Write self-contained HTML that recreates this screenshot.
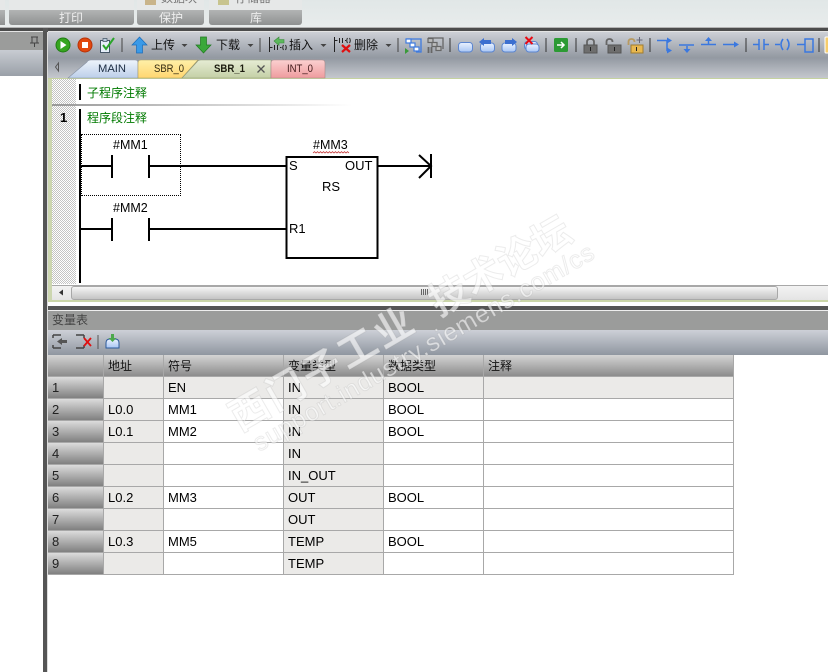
<!DOCTYPE html>
<html lang="zh"><head><meta charset="utf-8"><title>变量表</title>
<style>
html,body{margin:0;padding:0;background:#fff}
#p{position:relative;width:828px;height:672px;overflow:hidden;background:#fff;font:13px/16px "Liberation Sans","Noto Sans CJK SC",sans-serif;color:#000}
#p div{position:absolute}
.t{white-space:nowrap}
.g{color:#007a00;font-size:12px}
.tb{color:#111;font-size:12px;top:37px}
.cell{box-sizing:border-box;height:22px;border-right:1px solid #a8a8a8;border-bottom:1px solid #a8a8a8;padding:3px 0 0 4px;white-space:nowrap;line-height:16px}
.h{background:linear-gradient(#d4d4d4,#8c8c8c);font-size:12px;color:#111}
.n{background:linear-gradient(#dcdcdc,#808080);color:#222}
.x{background:#ebeae8}
.w{background:#fff}
</style></head><body><div id="p">
<!-- top ribbon -->
<div style="left:0;top:0;width:828px;height:27px;background:linear-gradient(#e1e7e7,#e8ecec)"></div>
<div style="left:0;top:0;width:5px;height:25px;background:linear-gradient(#e6e8e8 10px,#b2b4b4 10px,#8f9191)"></div>
<div style="left:9px;top:0;width:125px;height:25px;background:linear-gradient(#e6e8e8 10px,#b2b4b4 10px,#8f9191);border-radius:0 0 3px 3px"></div>
<div style="left:137px;top:0;width:67px;height:25px;background:linear-gradient(#e6e8e8 10px,#b2b4b4 10px,#8f9191);border-radius:0 0 3px 3px"></div>
<div style="left:209px;top:0;width:93px;height:25px;background:linear-gradient(#e6e8e8 10px,#b2b4b4 10px,#8f9191);border-radius:0 0 3px 3px"></div>
<div class="t" style="left:59px;top:10px;font-size:12px;color:#eee">打印</div>
<div class="t" style="left:159px;top:10px;font-size:12px;color:#eee">保护</div>
<div class="t" style="left:250px;top:10px;font-size:12px;color:#eee">库</div>
<div class="t" style="left:161px;top:-10px;font-size:12px;color:#777">数据块</div>
<div class="t" style="left:235px;top:-10px;font-size:12px;color:#777">存储器</div>
<div style="left:145px;top:0;width:11px;height:5px;background:#c9b48a"></div>
<div style="left:218px;top:0;width:11px;height:5px;background:#c8c48e"></div>
<div style="left:0;top:27px;width:828px;height:1px;background:#b4b4b4"></div>
<div style="left:0;top:28px;width:828px;height:3px;background:#4c4c4c"></div>
<div style="left:0;top:31px;width:828px;height:1px;background:#e4e4e4"></div>
<!-- left panel -->
<div style="left:0;top:32px;width:43px;height:18px;background:#9b9c9b"></div>
<div style="left:0;top:50px;width:43px;height:26px;background:linear-gradient(#c8ccd2,#9aa0a8)"></div>
<div style="left:43px;top:28px;width:5px;height:644px;background:#555"></div>
<div style="left:47px;top:32px;width:1px;height:640px;background:#dcdcdc"></div>
<!-- toolbar -->
<div style="left:48px;top:32px;width:780px;height:46px;background:linear-gradient(#cdd0d6,#9399a2 56%,#c5c8ce)"></div>
<div style="left:48px;top:78px;width:780px;height:1px;background:#c5d2a0"></div>
<div class="t tb" style="left:151px">上传</div>
<div class="t tb" style="left:216px">下载</div>
<div class="t tb" style="left:289px">插入</div>
<div class="t tb" style="left:354px">删除</div>
<!-- editor -->
<div style="left:48px;top:79px;width:4px;height:223px;background:#ccd6b0"></div>
<div style="left:79px;top:84px;width:2px;height:16px;background:#000"></div>
<div style="left:79px;top:109px;width:2px;height:174px;background:#000"></div>
<div class="t g" style="left:87px;top:85px">子程序注释</div>
<div class="t g" style="left:87px;top:110px">程序段注释</div>
<div style="left:81px;top:134px;width:98px;height:60px;border:1px dotted #000"></div>
<div class="t" style="left:113px;top:137px;font-size:12.5px">#MM1</div>
<div class="t" style="left:113px;top:200px;font-size:12.5px">#MM2</div>
<div class="t" style="left:313px;top:137px;font-size:12.5px">#MM3</div>
<div class="t" style="left:289px;top:158px;font-size:13px">S</div>
<div class="t" style="left:345px;top:158px;font-size:13px">OUT</div>
<div class="t" style="left:322px;top:179px;font-size:13px">RS</div>
<div class="t" style="left:289px;top:221px;font-size:13px">R1</div>
<!-- scrollbar -->
<div style="left:52px;top:285px;width:776px;height:15px;background:linear-gradient(#f3f3f3,#e4e4e4);border-top:1px solid #a8a8a8;box-sizing:border-box"></div>
<div style="left:71px;top:286px;width:707px;height:14px;box-sizing:border-box;background:linear-gradient(#f6f6f6,#dcdcdc 50%,#c4c4c4);border:1px solid #a8a8a8;border-radius:3px"></div>
<div style="left:48px;top:300px;width:780px;height:2px;background:#cbd6a8"></div>
<div style="left:48px;top:302px;width:780px;height:4px;background:#fff"></div>
<div style="left:48px;top:306px;width:780px;height:4px;background:#555"></div>
<div style="left:48px;top:310px;width:780px;height:1px;background:#eee"></div>
<!-- var table -->
<div style="left:48px;top:311px;width:780px;height:19px;background:#9b9c9b"></div>
<div class="t" style="left:52px;top:312px;font-size:12px;color:#444">变量表</div>
<div style="left:48px;top:330px;width:780px;height:25px;background:linear-gradient(#cdd0d7,#8f96a0)"></div>
<div class="cell h" style="left:48px;top:355px;width:56px"></div>
<div class="cell h" style="left:104px;top:355px;width:60px">地址</div>
<div class="cell h" style="left:164px;top:355px;width:120px">符号</div>
<div class="cell h" style="left:284px;top:355px;width:100px">变量类型</div>
<div class="cell h" style="left:384px;top:355px;width:100px">数据类型</div>
<div class="cell h" style="left:484px;top:355px;width:250px">注释</div>

<div class="cell n" style="left:48px;top:377px;width:56px">1</div><div class="cell x" style="left:104px;top:377px;width:60px"></div><div class="cell x" style="left:164px;top:377px;width:120px">EN</div><div class="cell x" style="left:284px;top:377px;width:100px">IN</div><div class="cell x" style="left:384px;top:377px;width:100px">BOOL</div><div class="cell x" style="left:484px;top:377px;width:250px"></div>
<div class="cell n" style="left:48px;top:399px;width:56px">2</div><div class="cell x" style="left:104px;top:399px;width:60px">L0.0</div><div class="cell w" style="left:164px;top:399px;width:120px">MM1</div><div class="cell x" style="left:284px;top:399px;width:100px">IN</div><div class="cell w" style="left:384px;top:399px;width:100px">BOOL</div><div class="cell w" style="left:484px;top:399px;width:250px"></div>
<div class="cell n" style="left:48px;top:421px;width:56px">3</div><div class="cell x" style="left:104px;top:421px;width:60px">L0.1</div><div class="cell w" style="left:164px;top:421px;width:120px">MM2</div><div class="cell x" style="left:284px;top:421px;width:100px">IN</div><div class="cell w" style="left:384px;top:421px;width:100px">BOOL</div><div class="cell w" style="left:484px;top:421px;width:250px"></div>
<div class="cell n" style="left:48px;top:443px;width:56px">4</div><div class="cell x" style="left:104px;top:443px;width:60px"></div><div class="cell w" style="left:164px;top:443px;width:120px"></div><div class="cell x" style="left:284px;top:443px;width:100px">IN</div><div class="cell w" style="left:384px;top:443px;width:100px"></div><div class="cell w" style="left:484px;top:443px;width:250px"></div>
<div class="cell n" style="left:48px;top:465px;width:56px">5</div><div class="cell x" style="left:104px;top:465px;width:60px"></div><div class="cell w" style="left:164px;top:465px;width:120px"></div><div class="cell x" style="left:284px;top:465px;width:100px">IN_OUT</div><div class="cell w" style="left:384px;top:465px;width:100px"></div><div class="cell w" style="left:484px;top:465px;width:250px"></div>
<div class="cell n" style="left:48px;top:487px;width:56px">6</div><div class="cell x" style="left:104px;top:487px;width:60px">L0.2</div><div class="cell w" style="left:164px;top:487px;width:120px">MM3</div><div class="cell x" style="left:284px;top:487px;width:100px">OUT</div><div class="cell w" style="left:384px;top:487px;width:100px">BOOL</div><div class="cell w" style="left:484px;top:487px;width:250px"></div>
<div class="cell n" style="left:48px;top:509px;width:56px">7</div><div class="cell x" style="left:104px;top:509px;width:60px"></div><div class="cell w" style="left:164px;top:509px;width:120px"></div><div class="cell x" style="left:284px;top:509px;width:100px">OUT</div><div class="cell w" style="left:384px;top:509px;width:100px"></div><div class="cell w" style="left:484px;top:509px;width:250px"></div>
<div class="cell n" style="left:48px;top:531px;width:56px">8</div><div class="cell x" style="left:104px;top:531px;width:60px">L0.3</div><div class="cell w" style="left:164px;top:531px;width:120px">MM5</div><div class="cell x" style="left:284px;top:531px;width:100px">TEMP</div><div class="cell w" style="left:384px;top:531px;width:100px">BOOL</div><div class="cell w" style="left:484px;top:531px;width:250px"></div>
<div class="cell n" style="left:48px;top:553px;width:56px">9</div><div class="cell x" style="left:104px;top:553px;width:60px"></div><div class="cell w" style="left:164px;top:553px;width:120px"></div><div class="cell x" style="left:284px;top:553px;width:100px">TEMP</div><div class="cell w" style="left:384px;top:553px;width:100px"></div><div class="cell w" style="left:484px;top:553px;width:250px"></div>

<!-- graphics -->
<svg width="828" height="672" viewBox="0 0 828 672" style="position:absolute;left:0;top:0">
<defs>
<linearGradient id="tm" x1="0" y1="0" x2="0" y2="1"><stop offset="0" stop-color="#eef4fc"/><stop offset="1" stop-color="#bccfea"/></linearGradient>
<linearGradient id="ty" x1="0" y1="0" x2="0" y2="1"><stop offset="0" stop-color="#fff0a8"/><stop offset="1" stop-color="#ffd670"/></linearGradient>
<linearGradient id="tg" x1="0" y1="0" x2="0" y2="1"><stop offset="0" stop-color="#e6ecd4"/><stop offset="1" stop-color="#c4d0a6"/></linearGradient>
<linearGradient id="tp" x1="0" y1="0" x2="0" y2="1"><stop offset="0" stop-color="#fbd0d0"/><stop offset="1" stop-color="#ef9c9e"/></linearGradient>
<linearGradient id="bl" x1="0" y1="0" x2="0" y2="1"><stop offset="0" stop-color="#eaf2ff"/><stop offset="1" stop-color="#a9c6f4"/></linearGradient>
<linearGradient id="fade" x1="0" y1="0" x2="1" y2="0"><stop offset="0" stop-color="#999"/><stop offset="1" stop-color="#fff"/></linearGradient>
<pattern id="chk" x="0" y="0" width="2" height="2" patternUnits="userSpaceOnUse"><rect width="2" height="2" fill="#fff"/><rect width="1" height="1" fill="#c4c4c4"/><rect x="1" y="1" width="1" height="1" fill="#c4c4c4"/></pattern>
</defs>
<rect x="52" y="79" width="24" height="205" fill="url(#chk)" shape-rendering="crispEdges"/>
<rect x="52" y="104" width="300" height="2" fill="url(#fade)"/>
<text x="60" y="122" font-family="Liberation Sans,sans-serif" font-size="13" font-weight="bold">1</text>
<!-- pin -->
<path d="M31 37h7M32 37v6h5v-6M30 43h9M34.500 43v4" fill="none" stroke="#444" stroke-width="1"/>
<!-- tabs -->
<path d="M58.500 63v8l-3-4z" fill="none" stroke="#555"/>
<path d="M68 78 L87 62 Q88 60 91 60 H135 Q138 60 138 63 V78Z" fill="url(#tm)" stroke="#8a94a6" stroke-width=".6"/>
<path d="M138 78 V63 Q138 60 141 60 H198 L182 78Z" fill="url(#ty)" stroke="#a89a66" stroke-width=".6"/>
<path d="M182 78 L197 62 Q198 60 201 60 H271 V78Z" fill="url(#tg)" stroke="#8f9a78" stroke-width=".6"/>
<path d="M271 78 V63 Q271 60 274 60 H322 Q325 60 325 63 V78Z" fill="url(#tp)" stroke="#a88" stroke-width=".6"/>
<g font-family="Liberation Sans,sans-serif" font-size="11" fill="#1a2a40">
<text x="98" y="72" textLength="28" lengthAdjust="spacingAndGlyphs">MAIN</text><text x="154" y="72" fill="#332a10" textLength="30" lengthAdjust="spacingAndGlyphs">SBR_0</text>
<text x="214" y="72" font-weight="bold" fill="#1c1c10" textLength="31" lengthAdjust="spacingAndGlyphs">SBR_1</text><text x="287" y="72" fill="#401a1a" textLength="26" lengthAdjust="spacingAndGlyphs">INT_0</text></g>
<path d="M257.500 65.500l7 7M264.500 65.500l-7 7" stroke="#555" stroke-width="1.300"/>
<!-- play stop check -->
<circle cx="63" cy="45" r="7" fill="#36a51f" stroke="#1f7d12"/><path d="M60.500 41v8l6-4z" fill="#fff"/>
<circle cx="85" cy="45" r="7" fill="#e2480e" stroke="#b83208"/><rect x="82" y="42" width="6" height="6" fill="#fff"/>
<path d="M100.500 40.500h6l3 0v12h-9z" fill="#e6eefa" stroke="#456"/><path d="M103 38.500h4v3h-4z" fill="#bcd" stroke="#456" stroke-width=".7"/><path d="M103 45l3 4 8-11" fill="none" stroke="#2aa52a" stroke-width="2"/>
<path d="M122 38v14" stroke="#444"/>
<!-- up / down -->
<path d="M139.500 37l7.500 8h-4.500v8h-6v-8h-4.500z" fill="#3a9ae8" stroke="#1c6cb8" stroke-width=".7"/>
<path d="M181.500 44h6l-3 3z" fill="#444"/>
<path d="M203.500 53l7.500-8h-4.500v-8h-6v8h-4.500z" fill="#3aa83a" stroke="#1f7a1f" stroke-width=".7"/>
<path d="M247.500 44h6l-3 3z" fill="#444"/>
<path d="M260 38v14" stroke="#444"/>
<!-- insert -->
<path d="M269.500 37v15M269.500 47.500h3M274.500 45v5M277.500 45v5M280 47.500h1.500M283.500 45q-1.500 2.500 0 5M285.500 45q1.500 2.500 0 5" fill="none" stroke="#222" stroke-width="1"/>
<path d="M274 41l5-4v2.500h5v3.500h-5v2.500z" fill="#5cb85c" stroke="#3a8a3a" stroke-width=".6"/>
<path d="M320.500 44h6l-3 3z" fill="#444"/>
<!-- delete -->
<path d="M334.500 37v15M334.500 40.500h3M339.500 38v5M342.500 38v5M345 40.500h1M347.500 38q-1.500 2.500 0 5M349.500 38q1.500 2.500 0 5" fill="none" stroke="#222" stroke-width="1"/>
<path d="M342 45l8 7M350 45l-8 7" stroke="#e01010" stroke-width="2.200"/>
<path d="M385.500 44h6l-3 3z" fill="#444"/>
<path d="M398 38v14" stroke="#444"/>
<!-- network -->
<path d="M406 39h15v13h-5" fill="none" stroke="#3d7ae0" stroke-width="1.300"/><g fill="#fff" stroke="#3d7ae0" stroke-width="1.200"><rect x="406" y="39" width="5" height="4"/><rect x="410" y="43" width="5" height="4"/><rect x="414" y="47" width="5" height="4"/></g><path d="M405 48v6l4-3z" fill="#3a9a3a"/>
<path d="M428 38h15v11" fill="none" stroke="#666" stroke-width="1.300"/><g fill="#bbb" stroke="#666" stroke-width="1.200"><rect x="428" y="38.500" width="5" height="4"/><rect x="432" y="42.500" width="5" height="4"/><rect x="436" y="46.500" width="5" height="4"/></g><path d="M428.500 47v6M431.500 47v6" stroke="#666" stroke-width="1.800"/>
<path d="M450 38v14" stroke="#333"/>
<!-- rungs -->
<g fill="url(#bl)" stroke="#5c86d0"><rect x="458.500" y="42.500" width="14" height="9.500" rx="3"/><rect x="480.500" y="43" width="14" height="9" rx="3"/><rect x="502" y="43" width="14" height="9" rx="3"/><rect x="524.500" y="41.500" width="13" height="8" rx="3"/><rect x="526" y="44" width="13" height="8" rx="3"/></g>
<path d="M479 42l5-4v2h7v4h-7v2z" fill="#3c6fd0"/><path d="M517 42l-5-4v2h-7v4h7v2z" fill="#3c6fd0"/>
<path d="M525.500 37l7 7M532.500 37l-7 7" stroke="#e80a14" stroke-width="2"/>
<path d="M546 38v14" stroke="#333"/>
<rect x="554" y="38" width="14" height="14" rx="1.500" fill="#2c9a34"/><path d="M557 45h7M561 42l3 3-3 3" fill="none" stroke="#fff" stroke-width="1.500"/>
<path d="M576 38v14" stroke="#333"/>
<!-- locks -->
<path d="M587 45v-3q0-3 3.500-3t3.500 3v3" fill="none" stroke="#666" stroke-width="1.800"/><rect x="584" y="45" width="13" height="8" fill="#6e6e6e" stroke="#555"/><path d="M590.500 47v4" stroke="#222"/>
<path d="M606.500 45v-3q0-3 3-3t3 3" fill="none" stroke="#666" stroke-width="1.800"/><rect x="608" y="45" width="13" height="8" fill="#6e6e6e" stroke="#555"/><path d="M614.500 47v4" stroke="#222"/>
<path d="M628.500 45v-3q0-3 3-3t3 3" fill="none" stroke="#b89a60" stroke-width="1.800"/><rect x="631" y="45" width="12" height="8" fill="#e8b850" stroke="#a07c30"/><path d="M636.500 47v4" stroke="#222"/><path d="M639.500 37v6M636.500 40h6" stroke="#667" stroke-width="1"/>
<path d="M650 38v14" stroke="#333"/>
<!-- branch -->
<g fill="none" stroke="#3a78e0" stroke-width="1.500">
<path d="M657 40.500h11M667 40.500v10h3M679 45h15M687 46v5M701 44.500h15M708.500 44v-4M723 44.500h12M753 44.500h6M759 39v11M764 39v11M764 44.500h5M775 44.500h5M783 39q-4 5.500 0 11M787 39q4 5.500 0 11M797 44.500h8"/>
<rect x="805" y="39" width="8" height="13"/>
</g>
<g fill="#3a78e0"><path d="M667 37.500l5 3-5 3zM667 47.500l5 3-5 3zM683.500 49h7l-3.500 4zM705 41h7l-3.500-4zM734 41.500l5 3-5 3z"/></g>
<path d="M746 38v14M819 38v14" stroke="#333"/>
<rect x="825" y="37" width="5" height="16" rx="1" fill="#f6cd6c" stroke="#fff"/>
<!-- ladder -->
<g fill="none" stroke="#000" stroke-width="2">
<path d="M81 166h31M112 155v23M149 155v23M149 166h137M81 229h31M112 218v23M149 218v23M149 229h137"/>
<rect x="286.500" y="157" width="91" height="101"/>
<path d="M378 166h53M431 154v24M419 155l12 11-12 12"/>
</g>
<path d="M313 153l1.500-1.300 1.500 1.300 1.500-1.300 1.500 1.300 1.500-1.300 1.500 1.300 1.500-1.300 1.500 1.300 1.500-1.300 1.500 1.300 1.500-1.300 1.500 1.300 1.500-1.300 1.500 1.300 1.500-1.300 1.500 1.300 1.500-1.300 1.500 1.300 1.500-1.300 1.500 1.300 1.500-1.300 1.500 1.300 1.500-1.300 1.500 1.300" fill="none" stroke="#c03030" stroke-width=".8"/>
<!-- scrollbar marks -->
<path d="M63 289.500v6l-4-3z" fill="#333"/>
<path d="M421.500 289v6M423.500 289v6M425.500 289v6M427.500 289v6" stroke="#666"/>
<!-- var toolbar -->
<g fill="none" stroke="#444" stroke-width="1.500"><path d="M53 335h8M53 348h8M53 335v3M53 345v3"/></g>
<path d="M57 341.500l5-3.500v2h5v3h-5v2z" fill="#555"/>
<g fill="none" stroke="#444" stroke-width="1.500"><path d="M76 335h8M76 348h8M84 335v3M84 345v3"/></g>
<path d="M84 338l7 8M91 338l-7 8" stroke="#e01010" stroke-width="1.800"/>
<path d="M98 335v14" stroke="#555"/>
<path d="M106 348v-5q0-4 4-4h5q4 0 4 4v5z" fill="url(#bl)" stroke="#2c5a9a"/>
<path d="M112.500 342l-4-4h2.500v-4h3v4h2.500z" fill="#4ca84c"/>
<!-- watermark -->
<g transform="translate(250 410) rotate(-30)" fill="#fff" fill-opacity=".6" stroke="#888" stroke-opacity=".16" stroke-width="1">
<text x="-20" y="14" font-size="39" font-family="Noto Sans CJK SC,sans-serif" font-weight="bold" textLength="205">西门子工业</text>
<text x="210" y="14" font-size="39" font-family="Noto Sans CJK SC,sans-serif" font-weight="bold" textLength="157">技术论坛</text>
<text x="-13" y="41" font-size="25" font-family="Liberation Sans,sans-serif" textLength="389">support.industry.siemens.com/cs</text>
</g>
</svg>
</div></body></html>
